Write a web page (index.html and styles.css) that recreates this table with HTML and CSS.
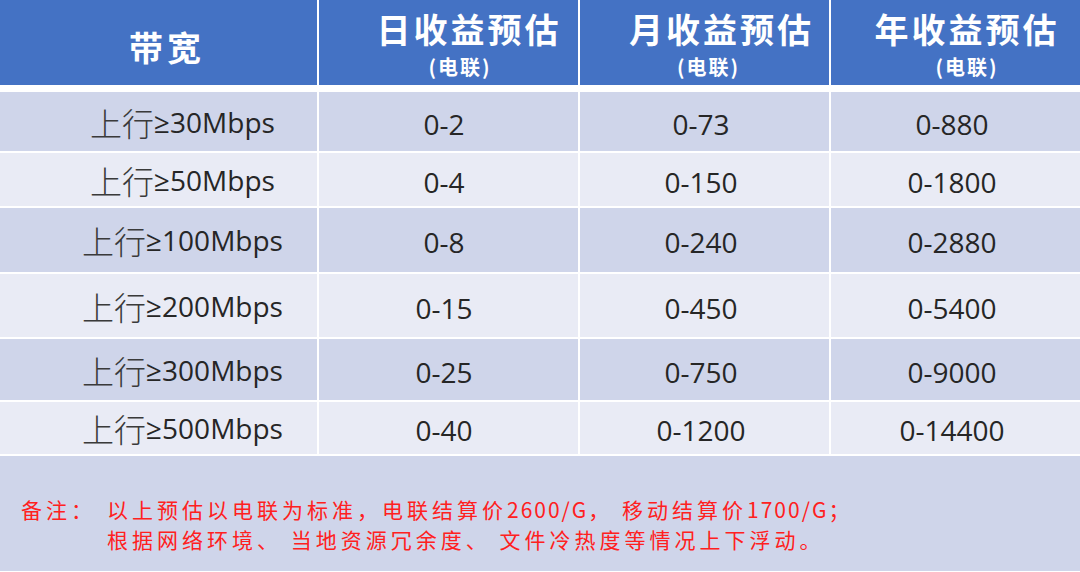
FILE: index.html
```html
<!DOCTYPE html>
<html lang="zh-CN">
<head>
<meta charset="utf-8">
<title>带宽收益预估</title>
<link rel="stylesheet" href="styles.css">
</head>
<body>
<div class="sheet">
  <div class="head">
    <div class="hcell hc1"><span class="title t1">带宽</span></div>
    <div class="hcell"><span class="title t2">日收益预估</span><span class="sub s2">(电联)</span></div>
    <div class="hcell"><span class="title t3">月收益预估</span><span class="sub s3">(电联)</span></div>
    <div class="hcell"><span class="title t4">年收益预估</span><span class="sub s4">(电联)</span></div>
  </div>
  <div class="grid">
    <div class="cell odd band"><span class="cjk">上行</span>≥30Mbps</div>
    <div class="cell odd v2">0-2</div>
    <div class="cell odd v3">0-73</div>
    <div class="cell odd v4">0-880</div>

    <div class="cell even band"><span class="cjk">上行</span>≥50Mbps</div>
    <div class="cell even v2">0-4</div>
    <div class="cell even v3">0-150</div>
    <div class="cell even v4">0-1800</div>

    <div class="cell odd band"><span class="cjk">上行</span>≥100Mbps</div>
    <div class="cell odd v2">0-8</div>
    <div class="cell odd v3">0-240</div>
    <div class="cell odd v4">0-2880</div>

    <div class="cell even band"><span class="cjk">上行</span>≥200Mbps</div>
    <div class="cell even v2">0-15</div>
    <div class="cell even v3">0-450</div>
    <div class="cell even v4">0-5400</div>

    <div class="cell odd band"><span class="cjk">上行</span>≥300Mbps</div>
    <div class="cell odd v2">0-25</div>
    <div class="cell odd v3">0-750</div>
    <div class="cell odd v4">0-9000</div>

    <div class="cell even band"><span class="cjk">上行</span>≥500Mbps</div>
    <div class="cell even v2">0-40</div>
    <div class="cell even v3">0-1200</div>
    <div class="cell even v4">0-14400</div>
  </div>
  <div class="note">
    <div class="note-label">备注：</div>
    <div class="note-text">
      <div class="note-line">以上预估以电联为标准，电联结算价<span class="num">2600/G</span>， 移动结算价<span class="num">1700/G</span>；</div>
      <div class="note-line">根据网络环境、 当地资源冗余度、 文件冷热度等情况上下浮动。</div>
    </div>
  </div>
</div>
</body>
</html>
```

FILE: styles.css
```css
html, body {
  margin: 0;
  padding: 0;
  background: #ffffff;
}

.sheet {
  width: 1080px;
  height: 572px;
  overflow: hidden;
  display: flex;
  flex-direction: column;
  background: #ffffff;
}

.head {
  display: grid;
  grid-template-columns: 317px 259px 249px 249px;
  column-gap: 2px;
  height: 85px;
  margin-bottom: 7px;
}

.hcell {
  background: #4472c4;
  color: #ffffff;
  display: flex;
  flex-direction: column;
  align-items: center;
  justify-content: flex-start;
  padding-top: 9px;
  box-sizing: border-box;
  font-family: "Noto Sans CJK SC", "Noto Sans", sans-serif;
  font-weight: 700;
}

.hc1 {
  justify-content: center;
  padding-top: 8px;
}

.title {
  font-size: 34px;
  line-height: 40px;
  letter-spacing: 3px;
  white-space: nowrap;
}

.t1 { letter-spacing: 4px; margin-left: 17px; }
.t2 { margin-left: 41px; }
.t3 { margin-left: 34px; }
.t4 { margin-left: 23px; }

.sub {
  font-size: 20px;
  line-height: 24px;
  letter-spacing: 2px;
  margin-top: 6px;
  white-space: nowrap;
}

.s2 { margin-left: 23px; }
.s3 { margin-left: 8px; }
.s4 { margin-left: 23px; }

.grid {
  display: grid;
  grid-template-columns: 317px 259px 249px 249px;
  grid-template-rows: 59px 53px 64px 63px 61px 52px;
  column-gap: 2px;
  row-gap: 2px;
}

.cell {
  display: flex;
  align-items: center;
  justify-content: center;
  box-sizing: border-box;
  padding-top: 4px;
  font-family: "Open Sans", "Noto Sans", sans-serif;
  font-size: 28px;
  color: #262626;
  white-space: nowrap;
}

.odd { background: #cfd5ea; }
.even { background: #e9ebf5; }

.band {
  padding-left: 48px;
  padding-top: 0;
}

.cjk {
  font-family: "Noto Sans CJK SC", sans-serif;
  font-weight: 300;
  font-size: 32px;
  color: #3a3a3a;
}

.v2 { padding-right: 9px; }
.v3 { padding-right: 7px; }
.v4 { padding-right: 7px; }

.note {
  margin-top: 2px;
  height: 115px;
  background: #cfd5ea;
  display: flex;
  box-sizing: border-box;
  padding-top: 38px;
  padding-left: 21px;
  font-family: "Noto Sans CJK SC", "Noto Sans", sans-serif;
  font-size: 21px;
  letter-spacing: 4px;
  color: #ff2020;
}

.note-label {
  width: 86px;
  flex: none;
  line-height: 30px;
}

.note-line {
  line-height: 30px;
  white-space: nowrap;
}

.num {
  letter-spacing: 2px;
}
```
